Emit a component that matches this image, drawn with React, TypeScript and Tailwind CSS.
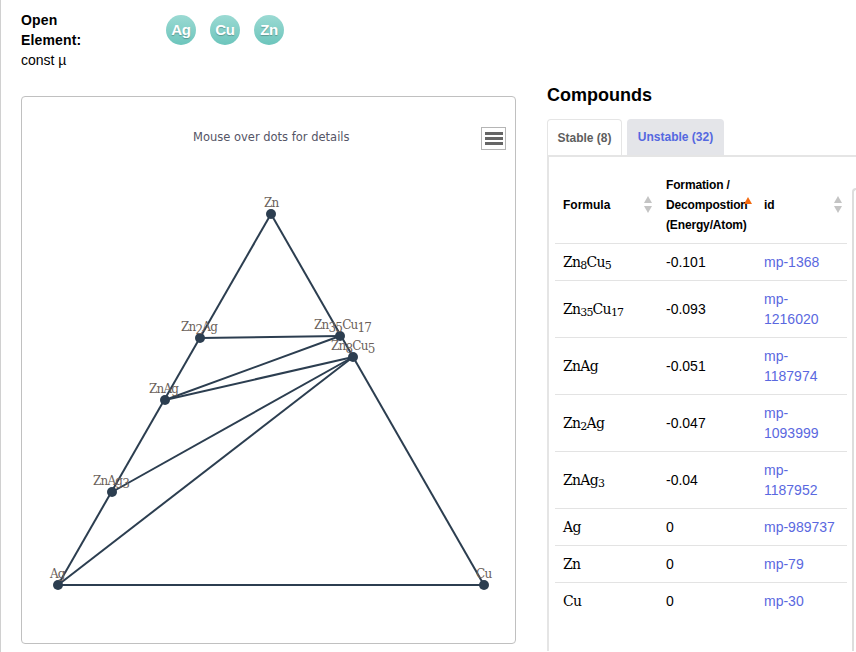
// Phase diagram page: open-element picker, ternary hull chart and compounds table.

const SANS = "font-['Liberation_Sans',Arial,sans-serif]";
const SLAB = "font-['DejaVu_Serif',serif]";

const NODES = {
  zn: [271, 214],
  cu: [484, 585],
  ag: [58, 585],
  zn2ag: [200, 338],
  zn35cu17: [340, 336],
  zn8cu5: [353, 357],
  znag: [165, 400],
  znag3: [112, 492],
};

type NodeKey = keyof typeof NODES;

const EDGES: [NodeKey, NodeKey][] = [
  ["zn", "ag"],
  ["zn", "cu"],
  ["ag", "cu"],
  ["zn2ag", "zn35cu17"],
  ["znag", "zn35cu17"],
  ["znag", "zn8cu5"],
  ["znag3", "zn8cu5"],
  ["ag", "zn8cu5"],
];

type Row = { f: [string, string?, string?, string?]; v: string; id: string };

const ROWS: Row[] = [
  { f: ["Zn", "8", "Cu", "5"], v: "-0.101", id: "mp-1368" },
  { f: ["Zn", "35", "Cu", "17"], v: "-0.093", id: "mp-1216020" },
  { f: ["ZnAg"], v: "-0.051", id: "mp-1187974" },
  { f: ["Zn", "2", "Ag"], v: "-0.047", id: "mp-1093999" },
  { f: ["ZnAg", "3"], v: "-0.04", id: "mp-1187952" },
  { f: ["Ag"], v: "0", id: "mp-989737" },
  { f: ["Zn"], v: "0", id: "mp-79" },
  { f: ["Cu"], v: "0", id: "mp-30" },
];

function Formula({ f }: { f: Row["f"] }) {
  return (
    <span className={`${SLAB} text-[14px] leading-[14px] tracking-[-0.7px] text-black`}>
      {f[0]}
      {f[1] && <sub className="text-[11px] tracking-[-0.9px]">{f[1]}</sub>}
      {f[2]}
      {f[3] && <sub className="text-[11px] tracking-[-0.9px]">{f[3]}</sub>}
    </span>
  );
}

function SortArrows({ active }: { active?: boolean }) {
  return (
    <svg width="8" height="18" viewBox="0 0 8 18" className="shrink-0">
      <path d="M4 0 L8 7 H0 Z" fill={active ? "#f26a10" : "#c4c4c4"} />
      {!active && <path d="M4 17 L8 10 H0 Z" fill="#c4c4c4" />}
    </svg>
  );
}

function ElementButton({ label }: { label: string }) {
  return (
    <div className="w-[30px] h-[30px] rounded-full bg-gradient-to-b from-[#9bdad3] to-[#6cc5bc] text-white font-bold text-[15px] tracking-[-0.3px] [text-shadow:0_1px_1px_rgba(0,0,0,0.25)] flex items-center justify-center">
      {label}
    </div>
  );
}

function Label({ x, y, parts }: { x: number; y: number; parts: [string, string?, string?, string?] }) {
  return (
    <text x={x} y={y} fontFamily="DejaVu Serif, serif" fontSize="12" letterSpacing="-0.8" fill="#6b5f5a">
      {parts[0]}
      {parts[1] && <tspan dy="3">{parts[1]}</tspan>}
      {parts[2] && <tspan dy="-3">{parts[2]}</tspan>}
      {parts[3] && <tspan dy="3">{parts[3]}</tspan>}
    </text>
  );
}

function Chart() {
  return (
    <div className="relative mt-[26px] w-[495px] h-[548px] border border-[#c0c0c0] rounded-[4px] bg-white">
      <svg width="856" height="652" viewBox="0 0 856 652" className="absolute -left-[22px] -top-[97px] pointer-events-none">
        {EDGES.map(([a, b]) => (
          <line
            key={a + b}
            x1={NODES[a][0]}
            y1={NODES[a][1]}
            x2={NODES[b][0]}
            y2={NODES[b][1]}
            stroke="#2c3e50"
            strokeWidth="2"
          />
        ))}
        {Object.entries(NODES).map(([k, p]) => (
          <circle key={k} cx={p[0]} cy={p[1]} r="5" fill="#2c3e50" />
        ))}
        <text x="193" y="141" fontFamily="DejaVu Sans, sans-serif" fontSize="11.5" fill="#555566">
          Mouse over dots for details
        </text>
        <Label x={264} y={207} parts={["Zn"]} />
        <Label x={181} y={331} parts={["Zn", "2", "Ag"]} />
        <Label x={314} y={329} parts={["Zn", "35", "Cu", "17"]} />
        <Label x={331} y={350} parts={["Zn", "8", "Cu", "5"]} />
        <Label x={149} y={393} parts={["ZnAg"]} />
        <Label x={93} y={485} parts={["ZnAg", "3"]} />
        <Label x={50} y={578} parts={["Ag"]} />
        <Label x={476} y={578} parts={["Cu"]} />
      </svg>
      <div className="absolute right-[9px] top-[30px] w-[25px] h-[23px] border border-[#b5b5b5] flex flex-col items-center justify-center gap-[2px]">
        <span className="w-[18px] h-[3px] bg-[#666]" />
        <span className="w-[18px] h-[3px] bg-[#666]" />
        <span className="w-[18px] h-[3px] bg-[#666]" />
      </div>
    </div>
  );
}

function CompoundsTable() {
  return (
    <div className="relative border-l-2 border-t-2 border-[#e5e5e5] h-[496px] overflow-hidden pl-[6px] pt-[7px]">
      <div className="absolute left-[303px] top-[31px] w-[10px] h-[470px] border-l-2 border-t-2 border-[#ddd] rounded-tl-[4px] bg-white" />
      <table className="w-[292px] table-fixed border-collapse text-[14px] text-black">
        <colgroup>
          <col className="w-[103px]" />
          <col className="w-[98px]" />
          <col />
        </colgroup>
        <thead>
          <tr className="h-[79px] border-b border-[#e3e3e3] text-[12px] font-bold leading-[20px] align-middle">
            <th className="pl-[8px] pr-[6px] pt-[3px] text-left">
              <div className="flex items-center justify-between">
                Formula
                <SortArrows />
              </div>
            </th>
            <th className="pl-[8px] pt-[3px] text-left">
              <div className="relative whitespace-nowrap tracking-[-0.15px]">
                Formation /<br />
                Decompostion<br />
                (Energy/Atom)
                <span className="absolute left-[78px] top-[22px]">
                  <SortArrows active />
                </span>
              </div>
            </th>
            <th className="pl-[8px] pr-[5px] pt-[3px] text-left">
              <div className="flex items-center justify-between">
                id
                <SortArrows />
              </div>
            </th>
          </tr>
        </thead>
        <tbody>
          {ROWS.map((r) => (
            <tr key={r.id} className="border-b border-[#e3e3e3] last:border-b-0 leading-[20px]">
              <td className="pl-[8px] py-[8px]">
                <Formula f={r.f} />
              </td>
              <td className="pl-[8px] py-[8px]">{r.v}</td>
              <td className="pl-[8px] py-[8px] pr-0 text-[#5a68e0] break-words whitespace-normal">
                {r.id.length > 9 ? (
                  <>
                    mp-
                    <br />
                    {r.id.slice(3)}
                  </>
                ) : (
                  r.id
                )}
              </td>
            </tr>
          ))}
        </tbody>
      </table>
    </div>
  );
}

export default function App() {
  return (
    <div className={`${SANS} w-[856px] h-[652px] overflow-hidden bg-white text-black text-[14px] border-l border-[#d0d0d0] flex`}>
      <div className="w-[546px] shrink-0 pl-[20px] pt-[10px]">
        <div className="flex">
          <div className="w-[145px] leading-[20px]">
            <div className="font-bold tracking-[0.15px]">
              Open
              <br />
              Element:
            </div>
            <div>const µ</div>
          </div>
          <div className="flex gap-[14px] pt-[5px] h-[35px]">
            <ElementButton label="Ag" />
            <ElementButton label="Cu" />
            <ElementButton label="Zn" />
          </div>
        </div>
        <Chart />
      </div>
      <div className="flex-1 pt-[84px]">
        <h2 className="text-[18px] leading-[22px] font-bold">Compounds</h2>
        <div className="mt-[13px] flex gap-[5px] text-[12px] font-bold h-[36px]">
          <div className="w-[75px] h-[36px] border border-b-0 border-[#e5e5e5] rounded-t-[4px] flex items-center justify-center text-[#5e5e5e]">
            Stable (8)
          </div>
          <div className="w-[97px] h-[36px] rounded-t-[4px] bg-[#e4e5e9] flex items-center justify-center text-[#5468e0]">
            Unstable (32)
          </div>
        </div>
        <CompoundsTable />
      </div>
    </div>
  );
}
